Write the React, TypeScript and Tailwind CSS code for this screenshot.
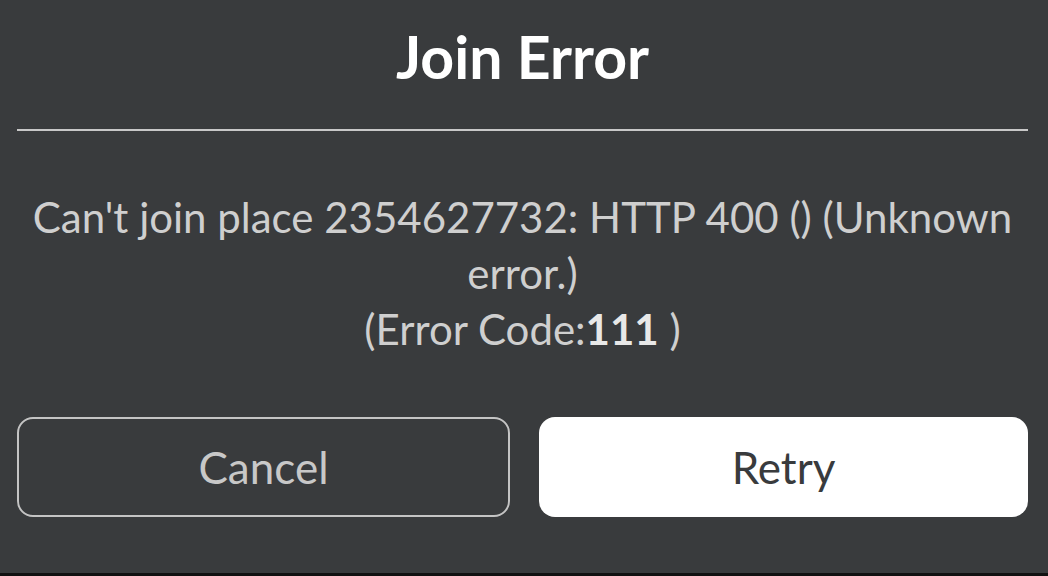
export default function App() {
  return (
    <div
      className="w-[1048px] h-[576px] bg-[#393b3d] border-b-[3px] border-[#111111] flex flex-col pl-[17px] pr-[20px]"
      style={{ fontFamily: 'Lato, "Noto Sans", sans-serif' }}
    >
      <div className="h-[129px] flex items-center justify-center pb-[14px]">
        <h1 className="text-[59px] font-bold text-white">Join Error</h1>
      </div>
      <div className="h-[2px] bg-[#c8c8c8]" />
      <div className="mt-[58px] text-center text-[42px] leading-[56px] text-[#cfcfcf]">
        <p>Can't join place 2354627732: HTTP 400 () (Unknown error.)</p>
        <p>
          (Error Code:<span className="font-bold text-[#e8e8e8]">111</span> )
        </p>
      </div>
      <div className="mt-auto mb-[56px] flex gap-[29px]">
        <button className="flex-1 h-[100px] rounded-[16px] border-2 border-[#c4c4c4] text-[44px] text-[#c8c8c8]">
          Cancel
        </button>
        <button className="flex-1 h-[100px] rounded-[16px] bg-white text-[44px] text-[#393b3d]">
          Retry
        </button>
      </div>
    </div>
  );
}
